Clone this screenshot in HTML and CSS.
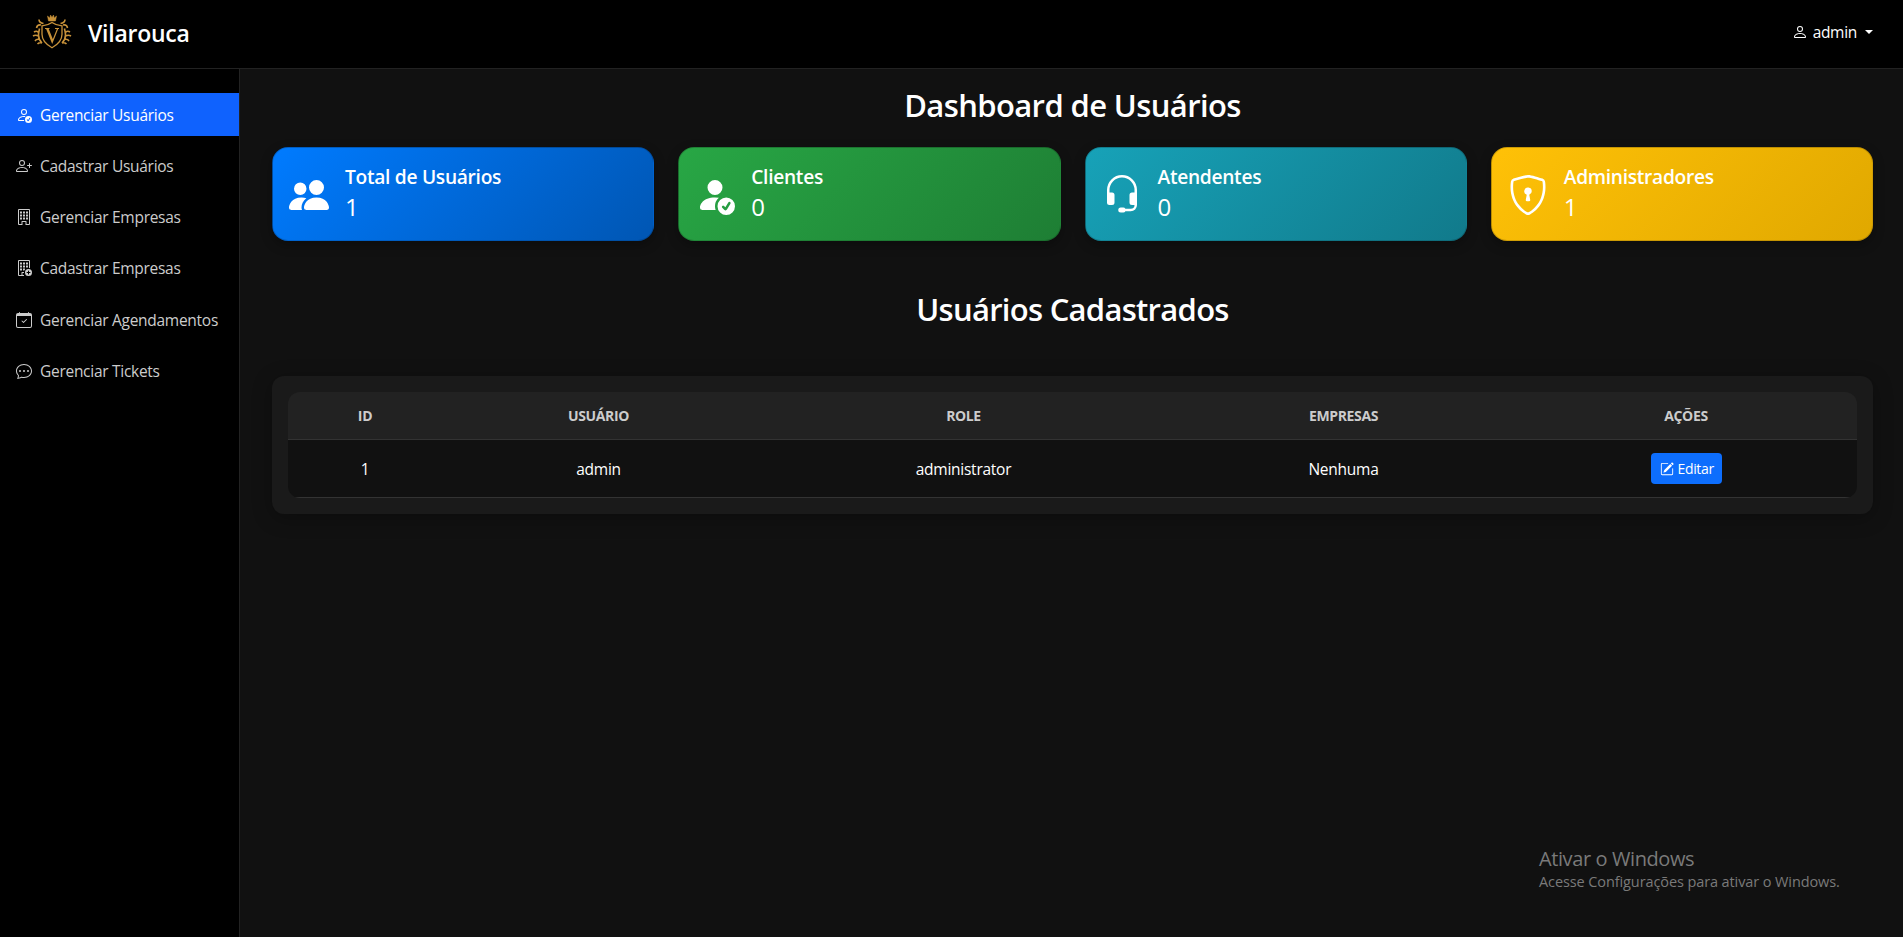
FILE: index.html
```html
<!DOCTYPE html>
<html lang="pt-BR">
<head>
<meta charset="utf-8">
<title>Vilarouca</title>
<link rel="stylesheet" href="styles.css">
</head>
<body>
<header class="topbar">
  <div class="brand">
    <svg class="brand-logo" viewBox="0 0 40 36" fill="none" stroke="#c8923a" stroke-width="1.3">
      <path d="M15.500 2l1 5h7l1-5-2.300 2L21.500 1 20 3.600 18.500 1l-.7 3z" fill="#c8923a" stroke-width=".5"/>
      <path d="M20 8.500c-3 2.200-6.500 3-10 3.300v8.500c0 6 5 10.700 10 13.500 5-2.800 10-7.500 10-13.500v-8.500c-3.500-.3-7-1.100-10-3.300z"/>
      <path d="M13 14.500h4.500M23 14.500h4M14.700 14.800l5.500 13.500 5.400-13.500M16 14.800l4.800 12" stroke-width="1.200"/>
      <path d="M11.500 9.500C8.500 9 7 8 7 5.500M9 11c-2.500-.5-4 .5-4.500 3M7.500 14.500c-.5 3-1 4-1 6.500s1 5.500 3.500 8M6.500 18.500c-1-1.500-3-1.500-4.500-.5M6.500 22c-2-1-4-1-5.500 0M7.500 25.500c-2-.5-3.500 0-4.500 1.500M10 29c-2-.5-3.500 0-4.500 1M28.500 9.500C31.500 9 33 8 33 5.500M31 11c2.500-.5 4 .5 4.500 3M32.500 14.500c.5 3 1 4 1 6.500s-1 5.500-3.500 8M33.500 18.500c1-1.500 3-1.500 4.500-.5M33.500 22c2-1 4-1 5.500 0M32.500 25.500c2-.5 3.500 0 4.500 1.500M30 29c2-.5 3.500 0 4.500 1" stroke-width="1.600"/>
    </svg>
    <span class="brand-name">Vilarouca</span>
  </div>
  <div class="account">
    <svg class="account-icon" viewBox="0 0 16 16" fill="currentColor"><path d="M8 8a3 3 0 1 0 0-6 3 3 0 0 0 0 6m2-3a2 2 0 1 1-4 0 2 2 0 0 1 4 0m4 8c0 1-1 1-1 1H3s-1 0-1-1 1-4 6-4 6 3 6 4m-1-.004c-.001-.246-.154-.986-.832-1.664C11.516 10.680 10.289 10 8 10s-3.516.680-4.168 1.332c-.678.678-.830 1.418-.832 1.664z"/></svg>
    <span class="account-name">admin</span>
    <span class="caret"></span>
  </div>
</header>
<div class="layout">
  <nav class="sidebar">
    <a class="nav-item active">
      <svg class="nav-icon" viewBox="0 0 16 16" fill="currentColor"><path d="M12.500 16a3.500 3.500 0 1 0 0-7 3.500 3.500 0 0 0 0 7m1.679-4.493-1.335 2.226a.75.75 0 0 1-1.174.144l-.774-.773a.5.5 0 0 1 .708-.708l.547.548 1.170-1.951a.5.5 0 1 1 .858.514M11 5a3 3 0 1 1-6 0 3 3 0 0 1 6 0M8 7a2 2 0 1 0 0-4 2 2 0 0 0 0 4"/><path d="M8.256 14a4.500 4.500 0 0 1-.229-1.004H3c.001-.246.154-.986.832-1.664C4.484 10.680 5.711 10 8 10q.390 0 .740.025c.226-.341.496-.650.804-.918Q8.844 9.002 8 9c-5 0-6 3-6 4s1 1 1 1z"/></svg>
      <span>Gerenciar Usuários</span>
    </a>
    <a class="nav-item">
      <svg class="nav-icon" viewBox="0 0 16 16" fill="currentColor"><path d="M6 8a3 3 0 1 0 0-6 3 3 0 0 0 0 6m2-3a2 2 0 1 1-4 0 2 2 0 0 1 4 0m4 8c0 1-1 1-1 1H1s-1 0-1-1 1-4 6-4 6 3 6 4m-1-.004c-.001-.246-.154-.986-.832-1.664C9.516 10.680 8.289 10 6 10s-3.516.680-4.168 1.332c-.678.678-.830 1.418-.832 1.664z"/><path d="M13.500 5a.5.5 0 0 1 .5.5V7h1.500a.5.5 0 0 1 0 1H14v1.500a.5.5 0 0 1-1 0V8h-1.500a.5.5 0 0 1 0-1H13V5.500a.5.5 0 0 1 .5-.5"/></svg>
      <span>Cadastrar Usuários</span>
    </a>
    <a class="nav-item">
      <svg class="nav-icon" viewBox="0 0 16 16" fill="currentColor"><path fill-rule="evenodd" d="M3 0a1 1 0 0 0-1 1v14a1 1 0 0 0 1 1h3.500v-3h3v3H13a1 1 0 0 0 1-1V1a1 1 0 0 0-1-1zm0 1h10v14h-2.500v-2.500a.5.5 0 0 0-.5-.5H6a.5.5 0 0 0-.5.5V15H3z"/><path d="M4 2.500h2v2H4zM7 2.500h2v2H7zM10 2.500h2v2h-2zM4 5.500h2v2H4zM7 5.500h2v2H7zM10 5.500h2v2h-2zM4 8.500h2v2H4zM7 8.500h2v2H7zM10 8.500h2v2h-2z"/></svg>
      <span>Gerenciar Empresas</span>
    </a>
    <a class="nav-item">
      <svg class="nav-icon" viewBox="0 0 16 16" fill="currentColor"><path fill-rule="evenodd" d="M12.500 16a3.500 3.500 0 1 0 0-7 3.500 3.500 0 0 0 0 7m.5-5v1h1a.5.5 0 0 1 0 1h-1v1a.5.5 0 1 1-1 0v-1h-1a.5.5 0 1 1 0-1h1v-1a.5.5 0 0 1 1 0"/><path d="M2 1a1 1 0 0 1 1-1h10a1 1 0 0 1 1 1v7.260a4.500 4.500 0 0 0-1-.230V1H3v14h2.500v-2.500A.5.5 0 0 1 6 12h2v1H6.500v2H8v.970L3 16a1 1 0 0 1-1-1zM4 2.500h2v2H4zM7 2.500h2v2H7zM10 2.500h2v2h-2zM4 5.500h2v2H4zM7 5.500h2v2H7zM10 5.500h2v2h-2zM4 8.500h2v2H4zM7 8.500h2v1L8.300 10.500H7z"/></svg>
      <span>Cadastrar Empresas</span>
    </a>
    <a class="nav-item">
      <svg class="nav-icon" viewBox="0 0 16 16" fill="currentColor"><path d="M10.854 7.146a.5.5 0 0 1 0 .708l-3 3a.5.5 0 0 1-.708 0l-1.500-1.500a.5.5 0 1 1 .708-.708L7.500 9.793l2.646-2.647a.5.5 0 0 1 .708 0"/><path d="M3.500 0a.5.5 0 0 1 .5.5V1h8V.5a.5.5 0 0 1 1 0V1h1a2 2 0 0 1 2 2v11a2 2 0 0 1-2 2H2a2 2 0 0 1-2-2V3a2 2 0 0 1 2-2h1V.5a.5.5 0 0 1 .5-.5M1 4v10a1 1 0 0 0 1 1h12a1 1 0 0 0 1-1V4z"/></svg>
      <span>Gerenciar Agendamentos</span>
    </a>
    <a class="nav-item">
      <svg class="nav-icon" viewBox="0 0 16 16" fill="currentColor"><path d="M5 8a1 1 0 1 1-2 0 1 1 0 0 1 2 0m4 0a1 1 0 1 1-2 0 1 1 0 0 1 2 0m3 1a1 1 0 1 0 0-2 1 1 0 0 0 0 2"/><path d="m2.165 15.803.020-.004c1.830-.363 2.948-.842 3.468-1.105A9 9 0 0 0 8 15c4.418 0 8-3.134 8-7s-3.582-7-8-7-8 3.134-8 7c0 1.760.743 3.370 1.970 4.600a10.400 10.400 0 0 1-.524 2.318l-.003.011a11 11 0 0 1-.244.637c-.079.186.074.394.273.362a22 22 0 0 0 .693-.125m.800-3.108a1 1 0 0 0-.287-.801C1.618 10.830 1 9.468 1 8c0-3.192 3.004-6 7-6s7 2.808 7 6-3.004 6-7 6a8 8 0 0 1-2.088-.272 1 1 0 0 0-.711.074c-.387.196-1.240.570-2.634.893a11 11 0 0 0 .398-2"/></svg>
      <span>Gerenciar Tickets</span>
    </a>
  </nav>
  <main class="content">
    <h2 class="title">Dashboard de Usuários</h2>
    <section class="cards">
      <article class="card blue">
        <svg class="card-icon" viewBox="0 0 16 16" fill="currentColor"><path d="M7 14s-1 0-1-1 1-4 5-4 5 3 5 4-1 1-1 1zm4-6a3 3 0 1 0 0-6 3 3 0 0 0 0 6m-5.784 6A2.240 2.240 0 0 1 5 13c0-1.355.680-2.750 1.936-3.720A6.300 6.300 0 0 0 5 9c-4 0-5 3-5 4s1 1 1 1zM4.500 8a2.500 2.500 0 1 0 0-5 2.500 2.500 0 0 0 0 5"/></svg>
        <div class="card-text"><h5 class="card-label">Total de Usuários</h5><p class="card-value">1</p></div>
      </article>
      <article class="card green">
        <svg class="card-icon" viewBox="0 0 16 16" fill="currentColor"><path d="M12.500 16a3.500 3.500 0 1 0 0-7 3.500 3.500 0 0 0 0 7m1.679-4.493-1.335 2.226a.75.75 0 0 1-1.174.144l-.774-.773a.5.5 0 0 1 .708-.708l.547.548 1.170-1.951a.5.5 0 1 1 .858.514M11 5a3 3 0 1 1-6 0 3 3 0 0 1 6 0"/><path d="M2 13c0 1 1 1 1 1h5.256A4.500 4.500 0 0 1 8 12.500a4.500 4.500 0 0 1 1.544-3.393Q8.844 9.002 8 9c-5 0-6 3-6 4"/></svg>
        <div class="card-text"><h5 class="card-label">Clientes</h5><p class="card-value">0</p></div>
      </article>
      <article class="card teal">
        <svg class="card-icon" viewBox="0 0 16 16" fill="currentColor"><path d="M8 1a5 5 0 0 0-5 5v1h1a1 1 0 0 1 1 1v3a1 1 0 0 1-1 1H3a1 1 0 0 1-1-1V6a6 6 0 1 1 12 0v6a2.500 2.500 0 0 1-2.500 2.500H9.366a1 1 0 0 1-.866.500h-1a1 1 0 1 1 0-2h1a1 1 0 0 1 .866.500H11.500A1.500 1.500 0 0 0 13 12h-1a1 1 0 0 1-1-1V8a1 1 0 0 1 1-1h1V6a5 5 0 0 0-5-5"/></svg>
        <div class="card-text"><h5 class="card-label">Atendentes</h5><p class="card-value">0</p></div>
      </article>
      <article class="card yellow">
        <svg class="card-icon" viewBox="0 0 16 16" fill="currentColor"><path d="M5.338 1.590a61 61 0 0 0-2.837.856.480.480 0 0 0-.328.390c-.554 4.157.726 7.190 2.253 9.188a10.700 10.700 0 0 0 2.287 2.233c.346.244.652.420.893.533q.180.085.293.118a1 1 0 0 0 .101.025 1 1 0 0 0 .100-.025q.114-.034.294-.118c.240-.113.547-.290.893-.533a10.700 10.700 0 0 0 2.287-2.233c1.527-1.997 2.807-5.031 2.253-9.188a.480.480 0 0 0-.328-.390c-.651-.213-1.750-.560-2.837-.855C9.552 1.290 8.531 1.067 8 1.067c-.530 0-1.552.223-2.662.524zM5.072.560C6.157.265 7.310 0 8 0s1.843.265 2.928.560c1.110.300 2.229.655 2.887.870a1.540 1.540 0 0 1 1.044 1.262c.596 4.477-.787 7.795-2.465 9.990a11.800 11.800 0 0 1-2.517 2.453 7 7 0 0 1-1.048.625c-.280.132-.581.240-.829.240s-.548-.108-.829-.240a7 7 0 0 1-1.048-.625 11.800 11.800 0 0 1-2.517-2.453C1.928 10.487.545 7.169 1.141 2.692A1.540 1.540 0 0 1 2.185 1.430 63 63 0 0 1 5.072.560"/><path d="M9.500 6.500a1.500 1.500 0 0 1-1 1.415l.385 1.990a.5.5 0 0 1-.491.595h-.788a.5.5 0 0 1-.490-.595l.384-1.990a1.500 1.500 0 1 1 2-1.415"/></svg>
        <div class="card-text"><h5 class="card-label">Administradores</h5><p class="card-value">1</p></div>
      </article>
    </section>
    <h2 class="title second">Usuários Cadastrados</h2>
    <section class="panel">
      <div class="table-clip">
        <table class="users">
          <colgroup><col class="c1"><col class="c2"><col class="c3"><col class="c4"><col class="c5"></colgroup>
          <thead><tr><th>ID</th><th>USUÁRIO</th><th>ROLE</th><th>EMPRESAS</th><th>AÇÕES</th></tr></thead>
          <tbody><tr><td>1</td><td>admin</td><td>administrator</td><td>Nenhuma</td><td><a class="edit"><svg class="edit-icon" viewBox="0 0 16 16" fill="currentColor"><path d="M15.502 1.940a.5.5 0 0 1 0 .706L14.459 3.690l-2-2L13.502.646a.5.5 0 0 1 .707 0l1.293 1.293zm-1.750 2.456-2-2L4.939 9.210a.5.5 0 0 0-.121.196l-.805 2.414a.25.25 0 0 0 .316.316l2.414-.805a.5.5 0 0 0 .196-.120z"/><path fill-rule="evenodd" d="M1 13.500A1.500 1.500 0 0 0 2.500 15h11a1.500 1.500 0 0 0 1.500-1.500v-6a.5.5 0 0 0-1 0v6a.5.5 0 0 1-.5.5h-11a.5.5 0 0 1-.5-.5v-11a.5.5 0 0 1 .5-.5H9a.5.5 0 0 0 0-1H2.500A1.500 1.500 0 0 0 1 2.500z"/></svg><span>Editar</span></a></td></tr></tbody>
        </table>
      </div>
    </section>
  </main>
</div>
<aside class="watermark">
  <div class="wm-title">Ativar o Windows</div>
  <div class="wm-text">Acesse Configurações para ativar o Windows.</div>
</aside>
</body>
</html>
```
FILE: styles.css
```css
* { box-sizing: border-box; }
body {
  margin: 0;
  height: 937px;
  overflow: hidden;
  display: flex;
  flex-direction: column;
  background: #111;
  color: #fff;
  font-family: "Open Sans", "Noto Sans", sans-serif;
  font-size: 16px;
  line-height: 24px;
}
h2, h5, p { margin: 0; }
svg { display: block; flex: none; }
.topbar {
  height: 69px;
  flex: none;
  display: flex;
  justify-content: space-between;
  padding: 0 30px 0 32px;
  background: #000;
  border-bottom: 1px solid #222;
}
.brand { display: flex; align-items: flex-start; gap: 16px; }
.brand-logo { width: 40px; height: 36px; margin-top: 14px; }
.brand-name { font-size: 23px; font-weight: 600; line-height: 30px; margin-top: 18px; letter-spacing: -.25px; }
.account { display: flex; align-items: center; height: 64px; }
.account-icon { width: 16px; height: 16px; margin-right: 5px; }
.account-name { font-size: 15.500px; letter-spacing: -.3px; margin-right: 8px; }
.caret { border-top: 4px solid #fff; border-left: 4px solid transparent; border-right: 4px solid transparent; }
.layout { flex: 1; display: flex; }
.sidebar {
  width: 240px;
  flex: none;
  padding-top: 24px;
  background: #000;
  border-right: 1px solid #222;
  display: flex;
  flex-direction: column;
  gap: 8.300px;
}
.nav-item {
  height: 43px;
  display: flex;
  align-items: center;
  gap: 8px;
  padding-left: 16px;
  color: #ccc;
  font-size: 15.500px;
  letter-spacing: -.28px;
  white-space: nowrap;
}
.nav-item.active { background: #0f62fe; color: #fff; }
.nav-icon { width: 16px; height: 16px; }
.content { flex: 1; padding: 17px 30px 0 32px; }
.title { font-size: 31px; line-height: 38px; font-weight: 600; text-align: center; letter-spacing: -.62px; }
.cards { margin-top: 23px; display: grid; grid-template-columns: repeat(4, 1fr); gap: 24px; }
.card {
  height: 94px;
  display: flex;
  align-items: center;
  gap: 16px;
  padding: 2px 15px 0 16px;
  border: 1px solid rgba(0, 0, 0, .175);
  border-radius: 16px;
  box-shadow: 0 4px 12px rgba(0, 0, 0, .3);
}
.blue { background: linear-gradient(135deg, #007bff, #0056b3); }
.green { background: linear-gradient(135deg, #28a745, #1e7e34); }
.teal { background: linear-gradient(135deg, #17a2b8, #117a8b); }
.yellow { background: linear-gradient(135deg, #ffc107, #e0a800); }
.card-icon { width: 40px; height: 40px; }
.card-label { font-size: 19.200px; font-weight: 600; line-height: 24px; letter-spacing: -.3px; }
.card-value { font-size: 24px; line-height: 36px; }
.second { margin-top: 49px; letter-spacing: -.72px; }
.panel {
  margin-top: 48px;
  padding: 16px;
  background: #1a1a1a;
  border-radius: 12px;
  box-shadow: 0 4px 20px rgba(0, 0, 0, .3);
}
.table-clip { border-radius: 12px; overflow: hidden; }
.users { width: 100%; table-layout: fixed; border-collapse: separate; border-spacing: 0; text-align: center; }
.c1 { width: 154px; }
.c2 { width: 313px; }
.c3 { width: 417px; }
.c4 { width: 343px; }
th { height: 48px; padding: 0; background: #222; color: #ccc; font-size: 14px; font-weight: 700; letter-spacing: -.35px; border-bottom: 1px solid #333; }
td { height: 58px; padding: 0; background: #111; border-bottom: 1px solid #333; font-size: 15.500px; letter-spacing: -.25px; }
.edit {
  display: inline-flex;
  align-items: center;
  gap: 4px;
  height: 31px;
  width: 71px;
  padding: 0 9px;
  border-radius: 4px;
  background: #0d6efd;
  font-size: 14px;
  letter-spacing: -.35px;
  vertical-align: middle;
}
.edit-icon { width: 14px; height: 14px; }
.watermark { position: absolute; left: 1539px; top: 845px; color: #7a7a7a; white-space: nowrap; }
.wm-title { font-size: 20px; line-height: 28px; letter-spacing: -.4px; }
.wm-text { font-size: 14.500px; line-height: 18px; letter-spacing: -.1px; }
```
